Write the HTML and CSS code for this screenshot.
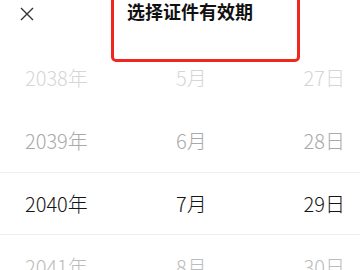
FILE: index.html
```html
<!DOCTYPE html>
<html lang="zh-CN">
<head>
    <meta charset="UTF-8">
    <meta name="viewport" content="width=device-width, initial-scale=1.0">
    <title>选择证件有效期</title>
    <link rel="stylesheet" href="styles.css">
</head>
<body>
    <!-- Header -->
    <div class="header">
        <button class="close-btn" aria-label="关闭">
            <svg width="14" height="14" viewBox="0 0 14 14">
                <path d="M1 1 L13 13 M13 1 L1 13" stroke="#333" stroke-width="1.4" fill="none"/>
            </svg>
        </button>
        <h2 class="title">选择证件有效期</h2>
        <div class="mark"></div>
    </div>

    <!-- Date picker -->
    <div class="picker">
        <div class="row far">
            <span class="year">2038年</span>
            <span class="month">5月</span>
            <span class="day">27日</span>
        </div>
        <div class="row near">
            <span class="year">2039年</span>
            <span class="month">6月</span>
            <span class="day">28日</span>
        </div>
        <div class="row selected">
            <span class="year">2040年</span>
            <span class="month">7月</span>
            <span class="day">29日</span>
        </div>
        <div class="row below">
            <span class="year">2041年</span>
            <span class="month">8月</span>
            <span class="day">30日</span>
        </div>
    </div>
</body>
</html>
```

FILE: styles.css
```css
body {
    margin: 0;
    padding: 0;
    background-color: #fff;
    font-family: "Noto Sans CJK SC", "Noto Sans", sans-serif;
    color: #1a1a1a;
    overflow: hidden;
}

.header {
    position: relative;
    display: flex;
    align-items: flex-start;
    height: 46px;
    box-sizing: border-box;
    padding: 2px 0 0 20px;
}

.close-btn {
    margin: 5px 0 0 0;
    padding: 0;
    border: none;
    background: none;
    width: 14px;
    height: 14px;
    line-height: 0;
}

.title {
    margin: 0 0 0 93px;
    font-size: 18px;
    line-height: 18px;
    font-weight: bold;
    color: #111;
}

/* red annotation box */
.mark {
    position: absolute;
    left: 111px;
    top: -10px;
    width: 189px;
    height: 72px;
    box-sizing: border-box;
    border: 3px solid #f0271f;
    border-radius: 5px;
}

.picker {
    display: flex;
    flex-direction: column;
}

.row {
    display: grid;
    grid-template-columns: 151px 1fr auto;
    align-items: center;
    height: 63px;
    padding: 0 15px 0 25px;
    font-size: 20px;
    font-weight: 300;
    box-sizing: border-box;
}

.row.far {
    color: #d6d6d6;
}

.row.near {
    color: #a9a9a9;
}

.row.selected {
    color: #151515;
    border-top: 1px solid #eee;
    border-bottom: 1px solid #eee;
}

.row.below {
    color: #bcbcbc;
}
```
